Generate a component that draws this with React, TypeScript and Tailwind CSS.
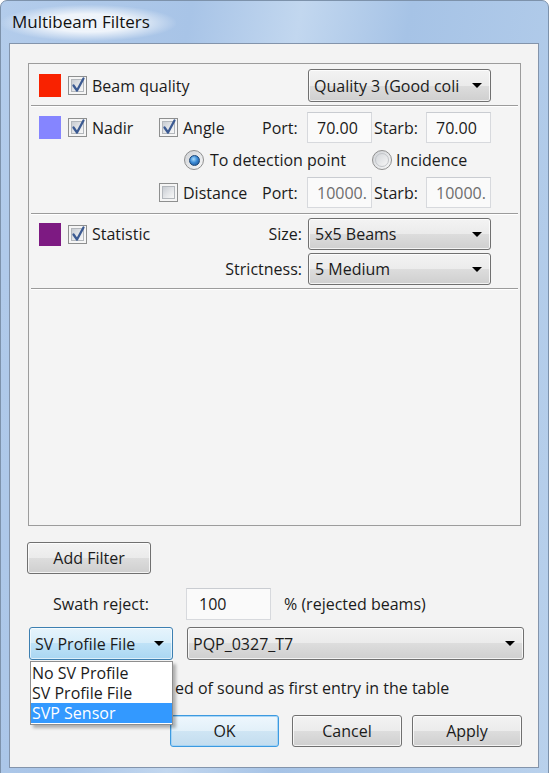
import React from "react";

const btnGray =
  "border border-[#707070] rounded-[3px] bg-[linear-gradient(to_bottom,#f3f3f3_0%,#ebebeb_50%,#dddddd_50%,#cfcfcf_100%)] shadow-[inset_0_0_0_1px_rgba(255,255,255,0.75)]";
const btnBlue =
  "border border-[#3c7fb1] rounded-[3px] bg-[linear-gradient(to_bottom,#e6f4fc_0%,#d6edfa_50%,#bfe2f7_50%,#a9d6f2_100%)] shadow-[inset_0_0_0_1px_rgba(255,255,255,0.6)]";

function CheckBox({ checked = false, className = "" }: { checked?: boolean; className?: string }) {
  return (
    <span className={`relative block h-[19px] w-[19px] shrink-0 border border-[#8e8f8f] bg-[#f5f5f5] ${className}`}>
      <span className="absolute inset-[2px] border border-[#b3b7bc] bg-[linear-gradient(135deg,#c8ccd2_0%,#e4e6e9_55%,#f8f8f8_100%)]" />
      {checked && (
        <svg viewBox="0 0 19 19" className="absolute -left-[1px] -top-[1px] h-[19px] w-[19px]">
          <path
            d="M5.5 9.5 L9 14.5 L15.5 2.5"
            fill="none"
            stroke="#3b5a92"
            strokeWidth="2.3"
            strokeLinecap="round"
            strokeLinejoin="round"
          />
        </svg>
      )}
    </span>
  );
}

function Radio({ selected = false }: { selected?: boolean }) {
  return (
    <span className="flex h-[20px] w-[20px] shrink-0 items-center justify-center rounded-full border border-[#8f8f8f] bg-[linear-gradient(135deg,#cfd2d6,#f8f8f8)]">
      {selected ? (
        <span className="h-[11px] w-[11px] rounded-full border border-[#1b4677] bg-[radial-gradient(circle_at_40%_35%,#a8dcfb_0%,#3b8ad6_45%,#174a86_100%)]" />
      ) : (
        <span className="h-[14px] w-[14px] rounded-full border border-[#c2c5c9] bg-[linear-gradient(135deg,#d4d7db,#f6f6f6)]" />
      )}
    </span>
  );
}

function Combo({
  text,
  className = "",
  focused = false,
}: {
  text: string;
  className?: string;
  focused?: boolean;
}) {
  return (
    <div
      className={`flex h-full items-center justify-between pl-[5px] pr-[8px] ${
        focused ? btnBlue : btnGray
      } ${className}`}
    >
      <span className="overflow-hidden whitespace-nowrap">{text}</span>
      <svg width="10" height="5" viewBox="0 0 10 5" className="ml-2 shrink-0">
        <path d="M0 0H10L5 5Z" fill="#000" />
      </svg>
    </div>
  );
}

function TextBox({
  value,
  disabled = false,
  className = "",
}: {
  value: string;
  disabled?: boolean;
  className?: string;
}) {
  return (
    <div
      className={`flex h-full items-center overflow-hidden whitespace-nowrap border border-[#d7d9dd] border-t-[#c9ccd1] bg-[#fafafa] pl-[9px] ${
        disabled ? "text-[#6d6d6d]" : ""
      } ${className}`}
    >
      {value}
    </div>
  );
}

function Swatch({ color }: { color: string }) {
  return <span className={`block h-[23px] w-[22px] shrink-0 ${color}`} />;
}

function Separator() {
  return <div className="mx-[2px] h-[2px] border-t border-b border-t-[#9b9b9b] border-b-white" />;
}

export default function App() {
  return (
    <div className="h-[773px] w-[551px] overflow-hidden bg-white">
      <div className="flex h-[790px] w-[549px] flex-col rounded-t-[7px] border border-[#7d92ab] bg-[linear-gradient(100deg,#b3cceb_0%,#a8c4e7_28%,#c2d7ef_44%,#a6c3e6_60%,#b9d1ec_100%)] font-['Open_Sans',sans-serif] text-[16px] text-[#1b1b1b]">
        {/* Title bar */}
        <div className="relative flex h-[42px] items-center pl-[11px]">
          <span className="absolute left-0 top-[4px] h-[36px] w-[175px] rounded-full bg-[radial-gradient(ellipse_at_center,rgba(255,255,255,0.8)_35%,rgba(255,255,255,0)_72%)]" />
          <span className="relative text-[17px] text-[#111]">Multibeam Filters</span>
        </div>

        {/* Client area */}
        <div className="ml-[8px] flex h-[725px] w-[530px] flex-col border border-[#8394ab] bg-[#f3f3f3] pl-[18px] pr-[14px]">
          {/* Filter list */}
          <div className="mt-[19px] mr-[3px] h-[463px] shrink-0 border border-[#9c9c9c] bg-[#f4f4f4]">
            {/* Beam quality */}
            <div className="flex h-[41px] items-center pl-[10px] pr-[29px] pt-[2px]">
              <Swatch color="bg-[#f92200]" />
              <CheckBox checked className="ml-[7px]" />
              <span className="ml-[5px]">Beam quality</span>
              <div className="ml-auto h-[33px] w-[183px]">
                <Combo text="Quality 3 (Good coli" />
              </div>
            </div>
            <Separator />

            {/* Nadir */}
            <div className="flex flex-col py-[5px] pl-[10px] pr-[29px]">
              <div className="flex h-[31px] items-center">
                <div className="flex w-[120px] items-center">
                  <Swatch color="bg-[#8585ff]" />
                  <CheckBox checked className="ml-[7px]" />
                  <span className="ml-[5px]">Nadir</span>
                </div>
                <div className="flex w-[103px] items-center">
                  <CheckBox checked />
                  <span className="ml-[5px]">Angle</span>
                </div>
                <span className="w-[45px]">Port:</span>
                <TextBox value="70.00" className="w-[65px]" />
                <span className="w-[54px] pl-[2px]">Starb:</span>
                <TextBox value="70.00" className="w-[65px]" />
              </div>
              <div className="flex h-[34px] items-center pl-[145px]">
                <div className="flex w-[188px] items-center">
                  <Radio selected />
                  <span className="ml-[6px]">To detection point</span>
                </div>
                <Radio />
                <span className="ml-[4px]">Incidence</span>
              </div>
              <div className="flex h-[31px] items-center pl-[120px]">
                <div className="flex w-[103px] items-center">
                  <CheckBox />
                  <span className="ml-[5px]">Distance</span>
                </div>
                <span className="w-[45px]">Port:</span>
                <TextBox value="10000." disabled className="w-[65px]" />
                <span className="w-[54px] pl-[2px]">Starb:</span>
                <TextBox value="10000." disabled className="w-[65px]" />
              </div>
            </div>
            <Separator />

            {/* Statistic */}
            <div className="flex items-start py-[3px] pl-[10px] pr-[29px]">
              <div className="flex h-[32px] items-center">
                <Swatch color="bg-[#7d1a82]" />
                <CheckBox checked className="ml-[7px]" />
                <span className="ml-[5px]">Statistic</span>
              </div>
              <div className="ml-auto flex flex-col gap-[3px]">
                <div className="flex h-[32px] items-center justify-end">
                  <span>Size:</span>
                  <div className="ml-[6px] h-full w-[183px]">
                    <Combo text="5x5 Beams" className="pl-[6px]" />
                  </div>
                </div>
                <div className="flex h-[32px] items-center justify-end">
                  <span>Strictness:</span>
                  <div className="ml-[6px] h-full w-[183px]">
                    <Combo text="5 Medium" className="pl-[6px]" />
                  </div>
                </div>
              </div>
            </div>
            <Separator />
          </div>

          {/* Add filter */}
          <button className={`-ml-[1px] mt-[16px] h-[32px] w-[124px] shrink-0 ${btnGray}`}>
            Add Filter
          </button>

          {/* Swath reject */}
          <div className="mt-[14px] flex h-[32px] shrink-0 items-center">
            <span className="w-[158px] pl-[25px]">Swath reject:</span>
            <TextBox value="100" className="w-[85px] pl-[12px]" />
            <span className="ml-[13px]">% (rejected beams)</span>
          </div>

          {/* SV profile */}
          <div className="mt-[7px] flex h-[33px] shrink-0">
            <div className="relative ml-[1px] h-full w-[144px]">
              <Combo text="SV Profile File" focused className="pl-[4px]" />
              <div className="absolute left-[1px] top-[34px] z-10 w-[143px] border border-[#8e8e8e] bg-white py-[1px] shadow-[3px_3px_3px_rgba(0,0,0,0.28)]">
                <div className="flex h-[20px] items-center pl-[1px]">No SV Profile</div>
                <div className="flex h-[20px] items-center pl-[1px]">SV Profile File</div>
                <div className="flex h-[20px] items-center bg-[#3399ff] pl-[1px] text-white">SVP Sensor</div>
              </div>
            </div>
            <div className="ml-[14px] h-full w-[337px]">
              <Combo text="PQP_0327_T7" />
            </div>
          </div>

          {/* Speed of sound option (mostly hidden behind the open list) */}
          <div className="mt-[18px] flex h-[20px] shrink-0 items-center pl-[147px]">
            <span>ed of sound as first entry in the table</span>
          </div>

          {/* Dialog buttons */}
          <div className="mt-[17px] flex h-[32px] shrink-0 justify-end pr-[2px]">
            <button className="w-[109px] rounded-[3px] border border-[#3c9ae0] bg-[linear-gradient(to_bottom,#eef7fd_0%,#e2f0f9_50%,#cfe5f4_50%,#c3ddef_100%)] shadow-[inset_0_0_0_1px_rgba(160,210,245,0.9)]">
              OK
            </button>
            <button className={`ml-[13px] w-[110px] ${btnGray}`}>Cancel</button>
            <button className={`ml-[10px] w-[110px] ${btnGray}`}>Apply</button>
          </div>
        </div>
      </div>
    </div>
  );
}
